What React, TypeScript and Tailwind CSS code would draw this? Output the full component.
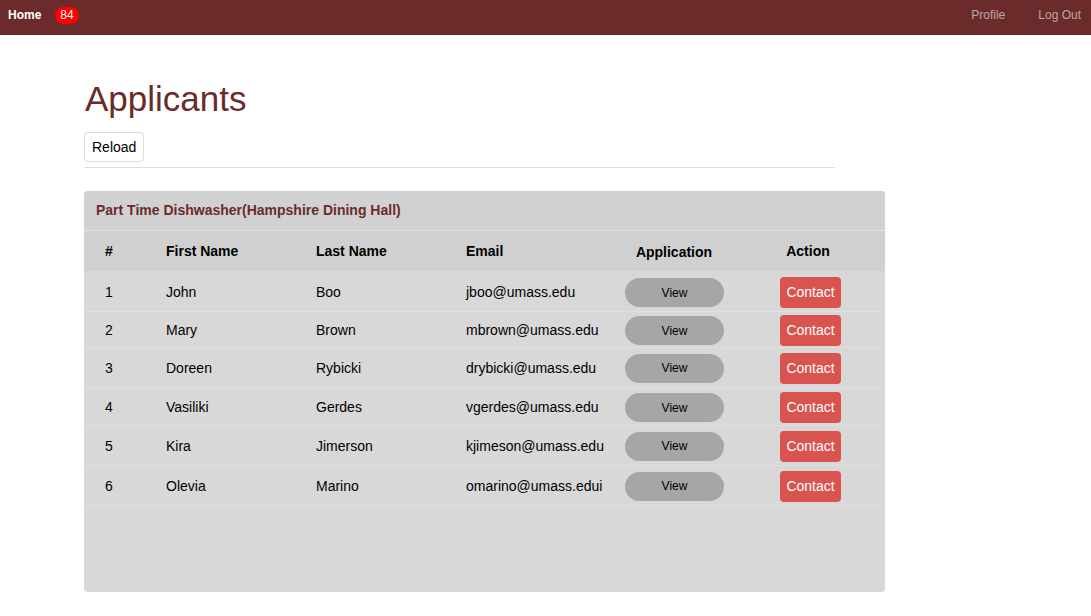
const applicants = [
  { id: 1, first: 'John', last: 'Boo', email: 'jboo@umass.edu', h: 'h-[41px] pt-[3px]' },
  { id: 2, first: 'Mary', last: 'Brown', email: 'mbrown@umass.edu', h: 'h-[36px] pt-[2px]' },
  { id: 3, first: 'Doreen', last: 'Rybicki', email: 'drybicki@umass.edu', h: 'h-[40px] pt-[1px]' },
  { id: 4, first: 'Vasiliki', last: 'Gerdes', email: 'vgerdes@umass.edu', h: 'h-[38px] pt-[2px]' },
  { id: 5, first: 'Kira', last: 'Jimerson', email: 'kjimeson@umass.edu', h: 'h-[40px] pt-[1px]' },
  { id: 6, first: 'Olevia', last: 'Marino', email: 'omarino@umass.edui', h: 'h-[40px] pt-[1px]' },
];

const cols = 'grid grid-cols-[61px_150px_150px_150px_158px_110px] items-center';

function Navbar() {
  return (
    <nav className="h-[35px] bg-[#6b2b2b] flex items-center justify-between px-2 pb-[5px] text-[12px]">
      <div className="flex items-center gap-[14px]">
        <span className="text-white font-bold">Home</span>
        <span className="bg-[#ff0000] text-white rounded-full px-[5px] h-[17px] leading-[17px] text-[12px]">84</span>
      </div>
      <div className="flex items-center gap-[33px] pr-[2px] text-[#b9a8a8]">
        <span>Profile</span>
        <span>Log Out</span>
      </div>
    </nav>
  );
}

export default function App() {
  return (
    <div className="min-h-[616px] bg-white font-['Liberation_Sans',Arial,sans-serif] text-[14px] text-black">
      <Navbar />
      <div className="pl-[84px]">
        <h1 className="pt-[44px] text-[35px] leading-[40px] text-[#6b2b2b] pl-[1px]">Applicants</h1>
        <button className="mt-[13px] h-[30px] px-[7px] border border-[#dcdcdc] rounded-[4px] bg-white text-[14px]">
          Reload
        </button>
        <div className="mt-[5px] w-[751px] border-t border-[#dddddd]" />

        <div className="mt-[23px] w-[801px] h-[401px] bg-[#d8d8d8] rounded-[4px] overflow-hidden">
          <div className="h-[40px] bg-[#d1d1d1] border-b border-[#e2e2e2] flex items-center pl-[12px] text-[14px] font-bold text-[#6b2b2b]">
            Part Time Dishwasher(Hampshire Dining Hall)
          </div>
          <div className={`${cols} h-[40px] bg-[#d0d0d0] font-bold`}>
            <div className="pl-[21px]">#</div>
            <div className="pl-[21px]">First Name</div>
            <div className="pl-[21px]">Last Name</div>
            <div className="pl-[21px]">Email</div>
            <div className="text-center pt-[2px]">Application</div>
            <div className="text-center">Action</div>
          </div>
          {applicants.map((a) => (
            <div key={a.id} className={`${cols} ${a.h} border-b border-[#e0e0e0]`}>
              <div className="pl-[21px]">{a.id}</div>
              <div className="pl-[21px]">{a.first}</div>
              <div className="pl-[21px]">{a.last}</div>
              <div className="pl-[21px] whitespace-nowrap">{a.email}</div>
              <div className="pl-[30px]">
                <button className="w-[99px] h-[29px] rounded-full bg-[#a6a6a6] text-[12px] text-black">View</button>
              </div>
              <div className="pl-[27px]">
                <button className="w-[61px] h-[31px] rounded-[4px] bg-[#d9534f] text-white text-[14px]">Contact</button>
              </div>
            </div>
          ))}
        </div>
      </div>
    </div>
  );
}
